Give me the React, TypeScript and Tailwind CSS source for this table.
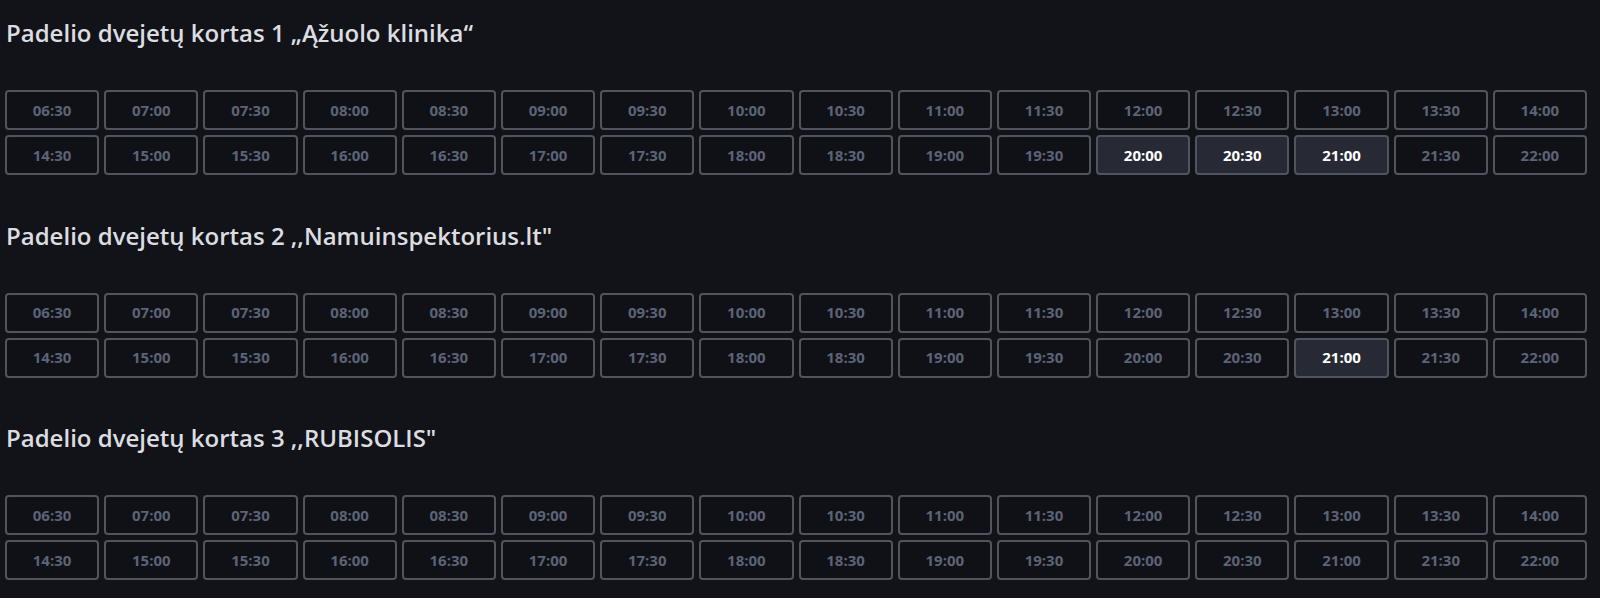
const slots = [
  "06:30", "07:00", "07:30", "08:00", "08:30", "09:00", "09:30", "10:00",
  "10:30", "11:00", "11:30", "12:00", "12:30", "13:00", "13:30", "14:00",
  "14:30", "15:00", "15:30", "16:00", "16:30", "17:00", "17:30", "18:00",
  "18:30", "19:00", "19:30", "20:00", "20:30", "21:00", "21:30", "22:00",
];

const courts = [
  { title: "Padelio dvejetų kortas 1 „Ąžuolo klinika“", free: ["20:00", "20:30", "21:00"] },
  { title: "Padelio dvejetų kortas 2 ,,Namuinspektorius.lt\"", free: ["21:00"] },
  { title: "Padelio dvejetų kortas 3 ,,RUBISOLIS\"", free: [] as string[] },
];

function Slot({ time, free }: { time: string; free: boolean }) {
  return (
    <button
      type="button"
      className={
        free
          ? "h-10 rounded-[4px] border-2 border-[#50545f] bg-[#272a34] text-[15px] font-bold text-white"
          : "h-10 rounded-[4px] border-2 border-[#50545f] bg-[#101116] text-[15px] font-bold text-[#5c6377]"
      }
    >
      {time}
    </button>
  );
}

export default function App() {
  return (
    <div className="min-h-[598px] bg-[#121318] font-['Open_Sans',sans-serif]">
      {courts.map((court) => (
        <section key={court.title} className="h-[202.5px] pt-[16px]">
          <h2 className="pl-[6px] text-[24px] font-semibold leading-[34px] text-[#dcdde0]">
            {court.title}
          </h2>
          <div className="ml-[5px] mt-[40px] grid w-[1582px] grid-cols-16 gap-x-[5px] gap-y-[5px]">
            {slots.map((t) => (
              <Slot key={t} time={t} free={court.free.includes(t)} />
            ))}
          </div>
        </section>
      ))}
    </div>
  );
}
